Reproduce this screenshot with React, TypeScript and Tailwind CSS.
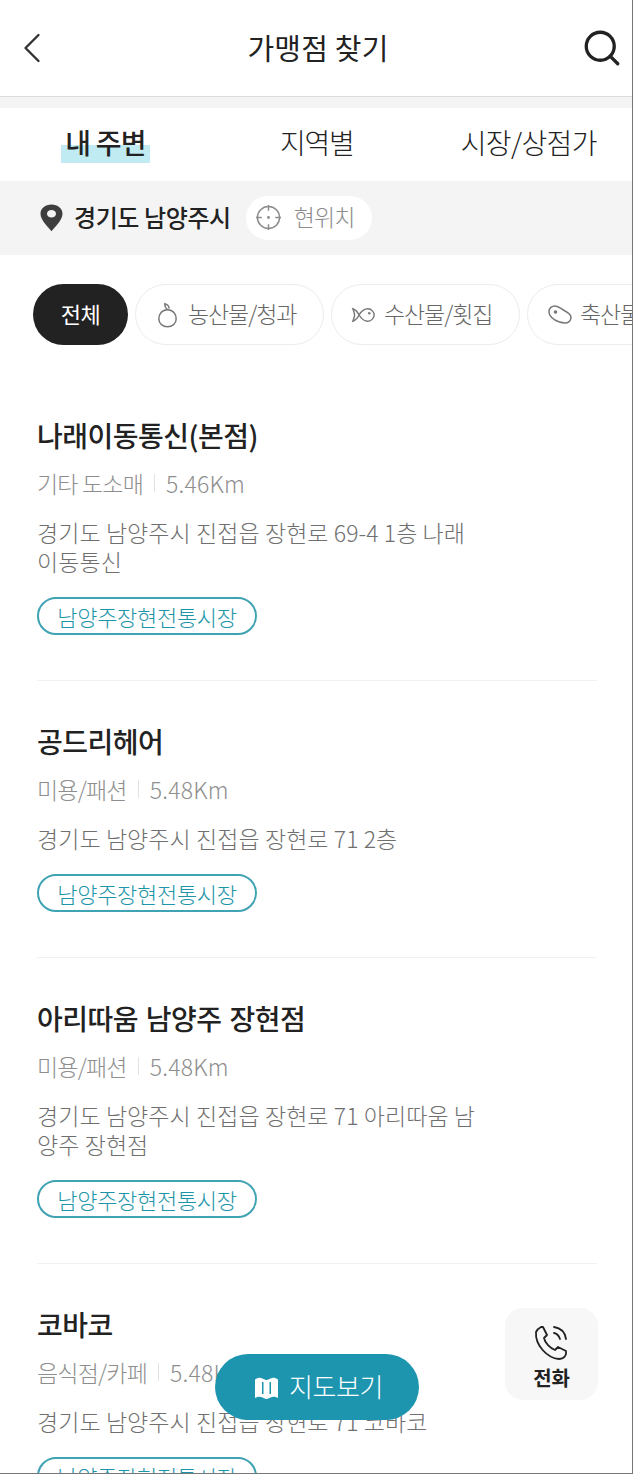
import { ChevronLeft, Search } from 'lucide-react';

const font = { fontFamily: '"Noto Sans CJK KR", "Noto Sans", sans-serif' };

const stores = [
  { name: '나래이동통신(본점)', cat: '기타 도소매', dist: '5.46Km', addr: ['경기도 남양주시 진접읍 장현로 69-4 1층 나래', '이동통신'] },
  { name: '공드리헤어', cat: '미용/패션', dist: '5.48Km', addr: ['경기도 남양주시 진접읍 장현로 71 2층'] },
  { name: '아리따움 남양주 장현점', cat: '미용/패션', dist: '5.48Km', addr: ['경기도 남양주시 진접읍 장현로 71 아리따움 남', '양주 장현점'] },
  { name: '코바코', cat: '음식점/카페', dist: '5.48Km', addr: ['경기도 남양주시 진접읍 장현로 71 코바코'] },
];

function StoreItem({ store }: { store: (typeof stores)[number] }) {
  return (
    <div className="ml-[37px] mr-[35px] border-b border-[#f1f1f1] pt-[40px] pb-[45px]">
      <h3 className="text-[28px] leading-[40px] font-medium tracking-[-0.5px] [word-spacing:2px] text-[#222]">{store.name}</h3>
      <div className="mt-[12px] flex items-center text-[23px] leading-[32px] font-light tracking-[-0.8px] text-[#8e8e8e]">
        <span>{store.cat}</span>
        <span className="mx-[11px] h-[18px] w-px bg-[#e2e2e2]" />
        <span className="tracking-[0.2px]">{store.dist}</span>
      </div>
      <div className="mt-[19px] text-[23px] leading-[29px] font-light tracking-[0.08px] text-[#6f6f6f]">
        {store.addr.map((line) => (
          <div key={line}>{line}</div>
        ))}
      </div>
      <div className="mt-[21px] flex h-[38px] w-[220px] items-center justify-center rounded-full border-2 border-[#3fa3b3] text-[22px] font-light tracking-[-0.3px] text-[#1d95a9]">
        남양주장현전통시장
      </div>
    </div>
  );
}

function Chip({ icon, label, className }: { icon: React.ReactNode; label: string; className: string }) {
  return (
    <div className={`flex h-[61px] shrink-0 items-center rounded-full border border-[#ececec] bg-white text-[23px] font-light tracking-[-1.1px] text-[#666] ${className}`}>
      {icon}
      <span className="mb-[3px]">{label}</span>
    </div>
  );
}

export default function App() {
  return (
    <div className="relative h-[1474px] w-[633px] overflow-hidden border-r border-b border-[#777] bg-white" style={font}>
      {/* header */}
      <header className="flex h-[97px] items-center justify-between border-b border-[#dcdcdc] pl-[6px] pr-[9px]">
        <ChevronLeft size={52} strokeWidth={1.1} className="text-[#333]" />
        <h1 className="mr-[3px] text-[29px] font-normal tracking-[0.2px] text-[#222]">가맹점 찾기</h1>
        <Search size={42} strokeWidth={1.9} className="text-[#222]" />
      </header>
      <div className="h-[11px] bg-[#f4f4f4]" />

      {/* tabs */}
      <nav className="flex h-[73px] items-center pb-[6px] text-[28px] tracking-[-0.8px] text-[#222]">
        <div className="ml-[61px] w-[89px] text-center font-medium">
          <span className="relative inline-block whitespace-nowrap">
            <span className="absolute left-[-4px] right-[-4px] top-[24px] h-[18px] bg-[#c0ebf3]" />
            <span className="relative">내 주변</span>
          </span>
        </div>
        <div className="ml-[130px] font-light tracking-[-1.2px]">지역별</div>
        <div className="ml-[107px] whitespace-nowrap font-light tracking-[-0.6px]">시장/상점가</div>
      </nav>

      {/* location */}
      <div className="flex h-[74px] items-center bg-[#f4f4f4] pl-[40px]">
        <svg width="23" height="28" viewBox="0 0 23 33" preserveAspectRatio="none" className="text-[#3e3e3e]">
          <path fill="currentColor" fillRule="evenodd" d="M11.5 0.5C5.2 0.5 0.5 5.3 0.5 11.4 0.5 18.8 8 27 11.5 32 15 27 22.5 18.8 22.5 11.4 22.5 5.3 17.8 0.5 11.5 0.5ZM11.500 7A4.500 4.500 0 1 1 11.500 16 4.500 4.500 0 1 1 11.500 7Z" />
        </svg>
        <span className="mb-[2px] ml-[11px] text-[24px] font-medium tracking-[-0.4px] text-[#222]">경기도 남양주시</span>
        <div className="ml-[15px] mb-[1px] flex h-[44px] w-[126px] items-center rounded-full bg-white pl-[9px] text-[23px] font-light tracking-[-0.9px] text-[#8c8c8c]">
          <svg width="27" height="27" viewBox="0 0 28 28" fill="none" stroke="#8c8c8c" strokeWidth="1.5">
            <circle cx="14" cy="14" r="11.500" />
            <path d="M14 1v6M14 21v6M1 14h6M21 14h6" />
            <circle cx="14" cy="14" r="1.500" fill="#8c8c8c" stroke="none" />
          </svg>
          <span className="mb-[2px] ml-[12px]">현위치</span>
        </div>
      </div>

      {/* category chips */}
      <div className="flex gap-[7px] pl-[33px] pt-[29px]">
        <div className="flex h-[61px] w-[95px] shrink-0 items-center justify-center rounded-full bg-[#222] pb-[3px] text-[22px] tracking-[-0.5px] text-white">전체</div>
        <Chip
          className="w-[189px] pl-[21px]"
          label="농산물/청과"
          icon={
            <svg width="21" height="26" viewBox="0 0 24 30" fill="none" stroke="#777" strokeWidth="1.7" className="mr-[10px]">
              <path d="M12 9C5.5 9 2 14 2 19.500c0 5.500 4.500 9 10 9s10-3.500 10-9C22 14 18.500 9 12 9Z" />
              <path d="M12 9C10 7 8.500 4.500 9 2c2.500.5 4.500 3 5 5.500" />
            </svg>
          }
        />
        <Chip
          className="w-[189px] pl-[19px]"
          label="수산물/횟집"
          icon={
            <svg width="25" height="16" viewBox="0 0 26 18" fill="none" stroke="#777" strokeWidth="1.6" className="mr-[8px]">
              <path d="M8 9c3-5 7-7 10-7 4 0 7 4 7 7s-3 7-7 7c-3 0-7-2-10-7ZM8 9C6 5 4 3 1 2c1 3 2 5 2 7s-1 4-2 7c3-1 5-3 7-7Z" />
              <circle cx="19.500" cy="7" r="1.400" fill="#777" stroke="none" />
            </svg>
          }
        />
        <Chip
          className="w-[189px] pl-[20px]"
          label="축산물/정육"
          icon={
            <svg width="24" height="19" viewBox="0 0 24 19" fill="none" stroke="#777" strokeWidth="1.5" className="mr-[8px]">
              <path d="M1 6.500C1 3 4 1 7 1c4 0 6 3 10 5 3 1.500 6 3 6 6.500S20 18 17 18C10 18 1 13 1 6.500Z" />
              <circle cx="7.500" cy="7" r="1.800" fill="#777" stroke="none" />
            </svg>
          }
        />
      </div>

      {/* store list */}
      <div className="mt-[30px]">
        {stores.map((s) => (
          <StoreItem key={s.name} store={s} />
        ))}
      </div>

      {/* floating map button */}
      <button className="absolute left-[215px] top-[1354px] flex h-[66px] w-[204px] items-center gap-[11px] rounded-full bg-[#1e95af] pb-[4px] pl-[40px] text-[26px] font-light tracking-[-0.4px] text-white">
        <svg width="23" height="22" viewBox="0 0 23 22" className="mt-[6px]">
          <path fill="#fff" fillRule="evenodd" d="M0 2.500C3 .5 5 .5 7.500 1.500S11 3 11.500 3 13 2.500 15.500 1.500 20 .5 23 2.500V21C20 19.500 18 19.500 15.500 20.500S12 22 11.500 22 10 21.500 7.500 20.500 3 19.500 0 21ZM7 5v12h1.500V5ZM14.500 5v12H16V5Z" />
        </svg>
        지도보기
      </button>

      {/* floating call button */}
      <div className="absolute left-[505px] top-[1308px] flex h-[92px] w-[93px] flex-col items-center rounded-[18px] bg-[#f7f7f7] pt-[17px] text-[#222]">
        <svg width="36" height="36" viewBox="0 0 36 36" fill="none" stroke="#222" strokeWidth="1.8" strokeLinecap="round" strokeLinejoin="round" className="-ml-[2px]">
          <path d="M3 7c1-2 3-4 5-5l2 0 4 8-3 3c1 5 6 10 11 12l3-3 8 4v3c-1 3-4 5-7 5C14 33 2 20 3 7Z" />
          <path d="M21 2c7 1 11 5 12 12M21 8c3 .5 5 3 6 6" />
        </svg>
        <span className="mt-[3px] text-[20px] font-bold leading-[28px] tracking-[-0.2px]">전화</span>
      </div>
    </div>
  );
}
